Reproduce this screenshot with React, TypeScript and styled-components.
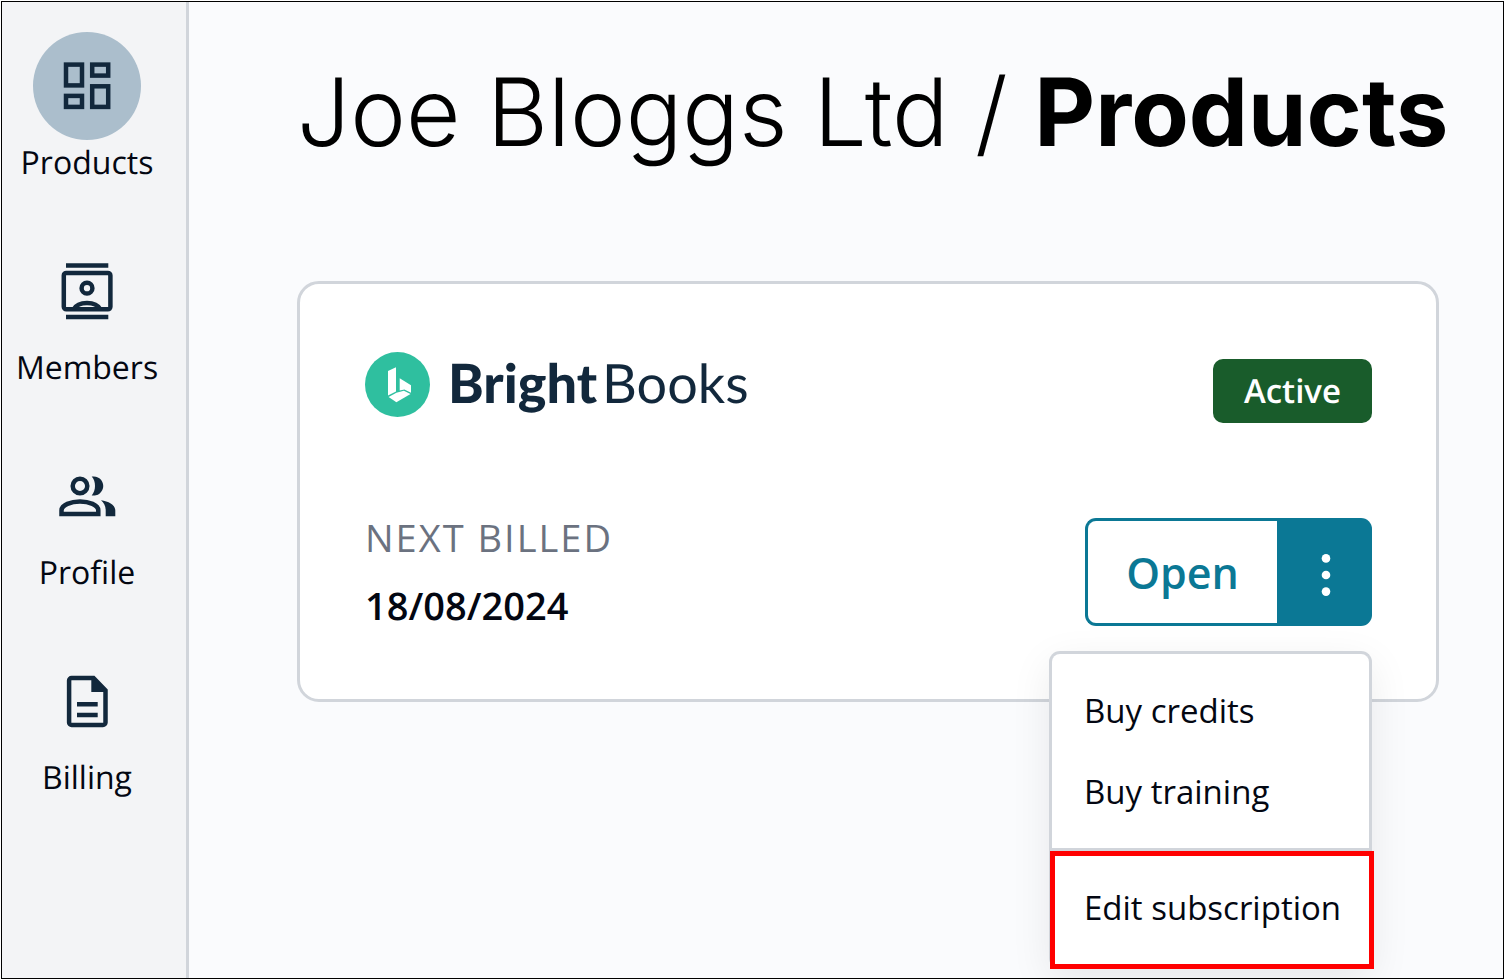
import React from "react";
import styled, { createGlobalStyle, css } from "styled-components";

const color = {
  ink: "#030712",
  navy: "#12283c",
  teal: "#0b7895",
  line: "#d1d5db",
  muted: "#6b7280",
};

const GlobalStyle = createGlobalStyle`
  *, *::before, *::after { box-sizing: border-box; }
  body {
    margin: 0;
    background: #fff;
    color: ${color.ink};
    font-family: "Open Sans", sans-serif;
    text-rendering: geometricPrecision;
  }
  button { font: inherit; cursor: pointer; }
`;

const Page = styled.div`
  min-height: 100vh;
  padding: 1px;
  display: flex;
`;

const Frame = styled.div`
  flex: 1;
  min-width: 0;
  display: flex;
  border: 1px solid #000;
  background: #fafbfd;
`;

const Sidebar = styled.nav`
  flex: none;
  width: 187px;
  padding: 30px 14px 30px 0;
  border-right: 3px solid ${color.line};
  background: #f3f4f6;
`;

const NavList = styled.ul`
  margin: 0;
  padding: 0;
  list-style: none;
  display: flex;
  flex-direction: column;
  gap: 51px;
`;

const NavLink = styled.a`
  display: flex;
  flex-direction: column;
  align-items: center;
  color: ${color.ink};
  font-size: 32px;
  line-height: 46px;
  text-decoration: none;
`;

const NavIcon = styled.span<{ $active?: boolean }>`
  width: 108px;
  height: 108px;
  display: grid;
  place-items: center;
  border-radius: 50%;
  color: ${color.navy};
  background: ${(p) => (p.$active ? "#abbecc" : "transparent")};

  svg {
    width: 62px;
    height: 62px;
  }
`;

const Main = styled.main`
  flex: 1;
  min-width: 0;
  padding: 50px 64px 48px 108px;
`;

const Title = styled.h1`
  margin: 0 0 109px;
  color: #000;
  font-family: Inter, sans-serif;
  font-size: 94px;
  font-weight: 300;
  line-height: 120px;
  white-space: nowrap;

  strong {
    font-weight: 700;
  }
`;

const Card = styled.section`
  padding: 68px 64px 59px 65px;
  border: 3px solid ${color.line};
  border-radius: 22px;
  background: #fff;
`;

const CardRow = styled.div`
  display: flex;
  justify-content: space-between;
`;

const CardHeader = styled(CardRow)`
  align-items: flex-start;
  margin-bottom: 81px;
`;

const CardBody = styled(CardRow)`
  align-items: center;
`;

const Brand = styled.div`
  display: flex;
  align-items: center;
  gap: 18px;

  svg {
    width: 65px;
    height: 65px;
  }
`;

const Wordmark = styled.span`
  display: flex;
  gap: 5px;
  padding-bottom: 4px;
  color: ${color.navy};
  font-family: Lato, sans-serif;
  font-size: 54px;
  line-height: 60px;

  b {
    font-weight: 900;
  }
`;

const Badge = styled.span`
  margin-top: 7px;
  padding: 10px 31px;
  border-radius: 10px;
  background: #195c2b;
  color: #fff;
  font-size: 33px;
  font-weight: 600;
  line-height: 44px;
`;

const Billing = styled.dl`
  margin: 0;
  font-size: 38px;
  line-height: 68px;

  dt {
    color: ${color.muted};
    letter-spacing: 2px;
  }

  dd {
    margin: 0;
    font-weight: 600;
  }
`;

const Actions = styled.div`
  position: relative;
  display: flex;
  height: 108px;
`;

const OpenButton = styled.button`
  width: 192px;
  padding: 0;
  border: 3px solid ${color.teal};
  border-right: 0;
  border-radius: 11px 0 0 11px;
  background: #fff;
  color: ${color.teal};
  && {
    font-size: 43px;
    font-weight: 600;
  }
`;

const MoreButton = styled.button`
  width: 95px;
  padding: 6px 0 0 2px;
  display: grid;
  place-items: center;
  border: 0;
  border-radius: 0 11px 11px 0;
  background: ${color.teal};
  color: #fff;

  svg {
    width: 62px;
    height: 62px;
  }
`;

const Menu = styled.div`
  position: absolute;
  top: calc(100% + 25px);
  right: 0;
  z-index: 1;
  width: 323px;
  padding-top: 16px;
  border: 3px solid ${color.line};
  border-bottom: 0;
  border-radius: 11px;
  background: #fff;
  box-shadow: 0 12px 40px rgba(0, 0, 0, 0.08);
`;

const MenuItem = styled.button<{ $highlighted?: boolean }>`
  display: block;
  width: 100%;
  height: 81px;
  padding: 0 32px;
  border: 0;
  background: #fff;
  color: ${color.ink};
  text-align: left;
  white-space: nowrap;
  && {
    font-size: 33px;
  }

  ${(p) =>
    p.$highlighted &&
    css`
      width: 324px;
      height: 118px;
      margin-left: -2px;
      padding: 0 29px 6px;
      border: 5px solid #f00;
    `}
`;

const MenuDivider = styled.hr`
  height: 3px;
  margin: 16px 0 0;
  border: 0;
  background: ${color.line};
`;

const Outline = styled.svg.attrs({ viewBox: "0 0 62 62", "aria-hidden": true })`
  fill: none;
  stroke: currentColor;
  stroke-width: 4.5;

  .solid {
    fill: currentColor;
    stroke: none;
  }
`;

const ProductsIcon = () => (
  <Outline>
    <rect x="10" y="9.6" width="16" height="20.8" />
    <rect x="36.2" y="9.6" width="16" height="11" />
    <rect x="10" y="40.9" width="16" height="11" />
    <rect x="36.2" y="31.3" width="16" height="20.6" />
  </Outline>
);

const MembersIcon = () => (
  <Outline>
    <path d="M10 5.5H52.3M10 57H52.3" />
    <rect x="7.8" y="12.9" width="46.6" height="36.4" rx="2.5" />
    <circle cx="31" cy="28.2" r="5.4" />
    <path d="M17.5 49.5C20 45 25 43 31 43S42 45 44.5 49.5" />
  </Outline>
);

const ProfileIcon = () => (
  <Outline>
    <circle cx="24" cy="21" r="7.3" />
    <path d="M5.5 49V45.5C5.5 40 15 36.4 24 36.4S42.3 40 42.3 45.5V49Z" />
    <path className="solid" d="M35.7 11.6A9.6 9.6 0 1 1 35.7 30.4C38 27.8 39 24.6 39 21S38 14.2 35.7 11.6Z" />
    <path className="solid" d="M45 35.3C52.5 36.3 59.3 40 59.3 45.5V51.2H49.7V45.5C49.7 41 48 37.7 45 35.3Z" />
  </Outline>
);

const BillingIcon = () => (
  <Outline>
    <path d="M15.6 8.1H37.5L49.5 20.3V52.4A2.5 2.5 0 0 1 47 54.9H15.6A2.5 2.5 0 0 1 13.1 52.4V10.6A2.5 2.5 0 0 1 15.6 8.1Z" />
    <path className="solid" d="M35.3 7V22H50.5Z" />
    <path d="M21 34.2H41.7M21 45H41.7" />
  </Outline>
);

const MoreIcon = () => (
  <svg viewBox="0 0 62 62" fill="currentColor" aria-hidden="true">
    <circle cx="31" cy="14.4" r="4.3" />
    <circle cx="31" cy="31" r="4.3" />
    <circle cx="31" cy="47.6" r="4.3" />
  </svg>
);

const BrandMark = () => (
  <svg viewBox="0 0 65 65" aria-hidden="true">
    <circle cx="32.5" cy="32.5" r="32.5" fill="#2fbf9f" />
    <g fill="#fff">
      <path d="M23 19 31 15.3V39.4L23 43.6Z" />
      <path d="M34.7 26.3 46 33.2V40.8L39.4 37.6 34.7 38.6Z" />
      <path d="M23.6 44.9 31.4 40.7 38.9 38.7 45.5 41.9 31.4 50.2Z" />
    </g>
  </svg>
);

const navItems = [
  { label: "Products", icon: <ProductsIcon />, active: true },
  { label: "Members", icon: <MembersIcon /> },
  { label: "Profile", icon: <ProfileIcon /> },
  { label: "Billing", icon: <BillingIcon /> },
];

export default function App() {
  return (
    <>
      <GlobalStyle />
      <Page>
        <Frame>
          <Sidebar aria-label="Main">
            <NavList>
              {navItems.map((item) => (
                <li key={item.label}>
                  <NavLink
                    href={`#${item.label.toLowerCase()}`}
                    aria-current={item.active ? "page" : undefined}
                  >
                    <NavIcon $active={item.active}>{item.icon}</NavIcon>
                    {item.label}
                  </NavLink>
                </li>
              ))}
            </NavList>
          </Sidebar>
          <Main>
            <Title>
              Joe Bloggs Ltd / <strong>Products</strong>
            </Title>
            <Card>
              <CardHeader>
                <Brand>
                  <BrandMark />
                  <Wordmark>
                    <b>Bright</b>
                    <span>Books</span>
                  </Wordmark>
                </Brand>
                <Badge>Active</Badge>
              </CardHeader>
              <CardBody>
                <Billing>
                  <dt>NEXT BILLED</dt>
                  <dd>18/08/2024</dd>
                </Billing>
                <Actions>
                  <OpenButton type="button">Open</OpenButton>
                  <MoreButton type="button" aria-label="More actions" aria-expanded="true">
                    <MoreIcon />
                  </MoreButton>
                  <Menu role="menu">
                    <MenuItem type="button" role="menuitem">Buy credits</MenuItem>
                    <MenuItem type="button" role="menuitem">Buy training</MenuItem>
                    <MenuDivider />
                    <MenuItem type="button" role="menuitem" $highlighted>
                      Edit subscription
                    </MenuItem>
                  </Menu>
                </Actions>
              </CardBody>
            </Card>
          </Main>
        </Frame>
      </Page>
    </>
  );
}
